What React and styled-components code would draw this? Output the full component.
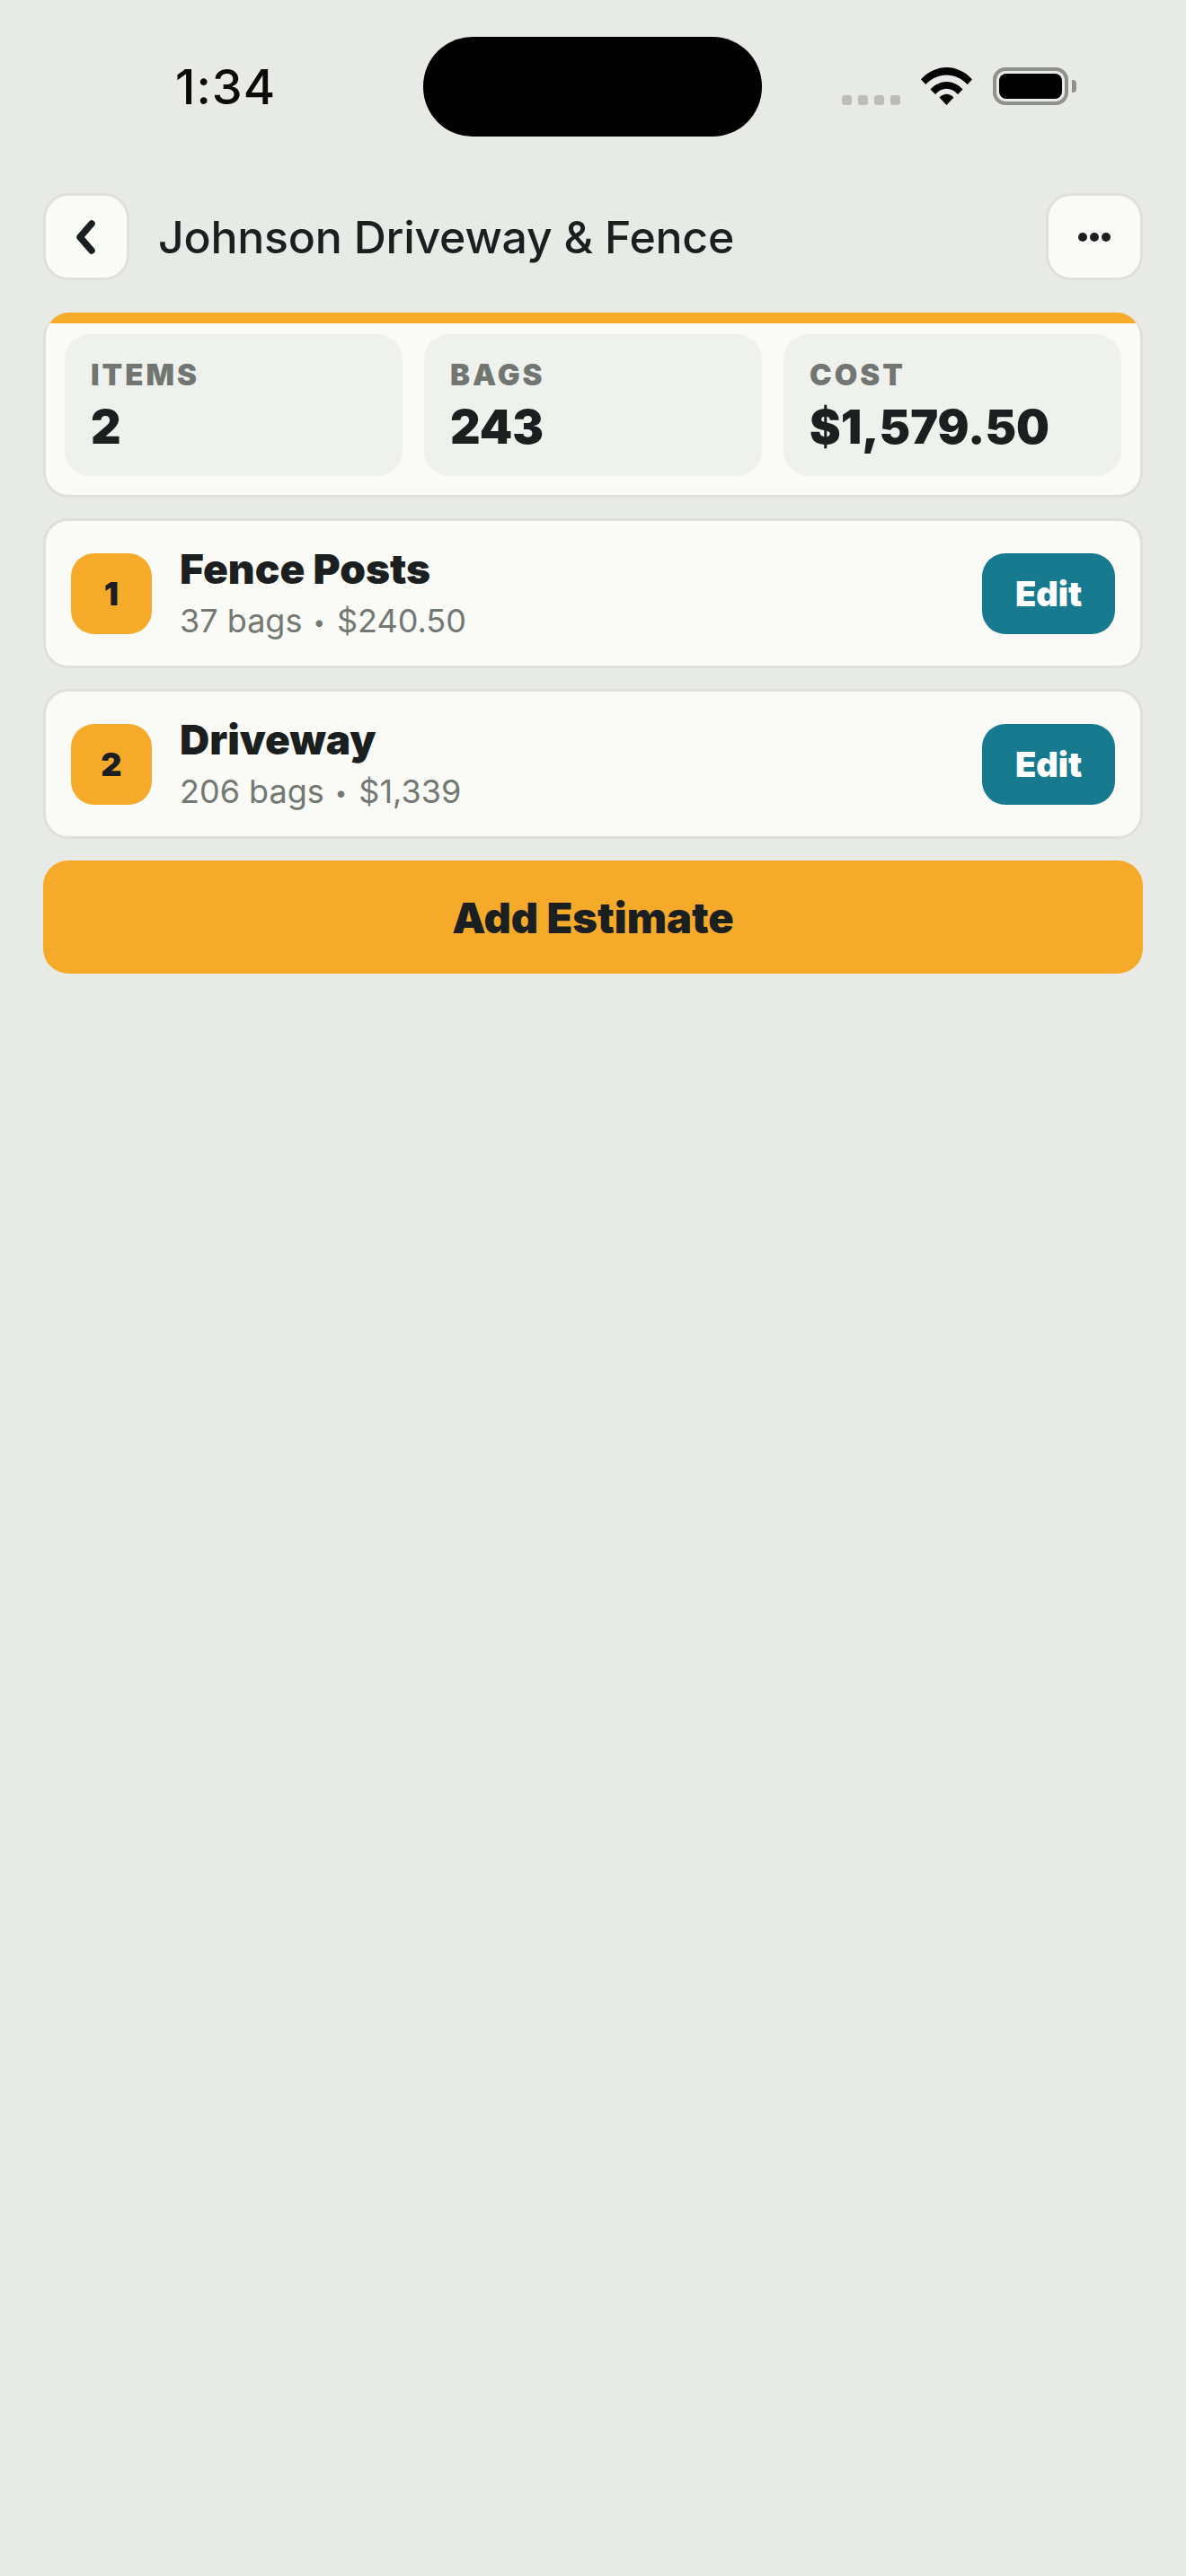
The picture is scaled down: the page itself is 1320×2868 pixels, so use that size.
import React from "react";
import styled, { createGlobalStyle } from "styled-components";

const GlobalStyle = createGlobalStyle`
  html, body {
    margin: 0;
    padding: 0;
    background: #e8eae5;
  }
  * {
    box-sizing: border-box;
  }
`;

const Screen = styled.div`
  width: 1320px;
  min-height: 2868px;
  background: #e8eae5;
  font-family: Inter, "Liberation Sans", sans-serif;
  color: #1b1f20;
`;

const StatusBar = styled.div`
  display: grid;
  grid-template-columns: 471px 377px 1fr;
  height: 152px;
  padding-top: 41px;
`;
const Time = styled.div`
  padding: 24px 0 0 195px;
  font-size: 54px;
  line-height: 64px;
  font-weight: 500;
  letter-spacing: 1px;
  color: #0a0a0a;
`;
const Island = styled.div`
  height: 111px;
  background: #000;
  border-radius: 55px;
`;
const StatusIcons = styled.div`
  display: flex;
  align-items: flex-start;
  padding: 34px 0 0 89px;
`;
const Signal = styled.div`
  display: flex;
  gap: 7px;
  margin: 31px 23px 0 0;
`;
const SignalDot = styled.span`
  width: 11px;
  height: 11px;
  border-radius: 3px;
  background: #bcbdb9;
`;
const Battery = styled.div`
  display: flex;
  align-items: center;
  margin-left: 23px;
`;
const BatteryShell = styled.div`
  width: 84px;
  height: 42px;
  padding: 3px;
  border: 4px solid #8f918d;
  border-radius: 14px;
`;
const BatteryFill = styled.div`
  height: 100%;
  background: #000;
  border-radius: 8px;
`;
const BatteryNub = styled.div`
  width: 5px;
  height: 14px;
  margin-left: 4px;
  background: #8f918d;
  border-radius: 0 4px 4px 0;
`;

const Content = styled.main`
  display: flex;
  flex-direction: column;
  gap: 23px;
  padding: 63px 48px 0;
`;
const Header = styled.header`
  display: flex;
  align-items: center;
  margin-bottom: 13px;
`;
const IconButton = styled.button`
  display: flex;
  align-items: center;
  justify-content: center;
  flex: none;
  width: ${(p) => p.$width}px;
  height: 97px;
  padding: 0;
  background: #fafbf6;
  border: 3px solid #dfe0db;
  border-radius: 28px;
`;
const Title = styled.h1`
  flex: 1;
  margin: 0 0 0 32px;
  font-size: 50px;
  line-height: 60px;
  font-weight: 500;
  letter-spacing: -0.25px;
  color: #1b1f20;
`;

const Card = styled.section`
  background: #fafbf6;
  border: 3px solid #dfe0db;
  border-radius: 28px;
`;
const SummaryCard = styled(Card)`
  border-top: 0;
  overflow: hidden;
`;
const AccentBar = styled.div`
  height: 12px;
  background: #f5aa2a;
`;
const Stats = styled.div`
  display: grid;
  grid-template-columns: repeat(3, 1fr);
  gap: 24px;
  padding: 12px 21px 21px;
`;
const StatTile = styled.div`
  height: 158px;
  padding: 25px 29px 0;
  background: #eff1ec;
  border-radius: 28px;
`;
const StatLabel = styled.div`
  font-size: 33px;
  line-height: 40px;
  font-weight: 900;
  letter-spacing: 3px;
  color: #727672;
`;
const StatValue = styled.div`
  margin-top: 8px;
  font-size: 52px;
  line-height: 62px;
  font-weight: 900;
  color: #1b1f20;
`;

const EstimateRow = styled(Card)`
  display: flex;
  align-items: center;
  height: 167px;
  padding: 0 28px;
`;
const Badge = styled.div`
  display: flex;
  align-items: center;
  justify-content: center;
  flex: none;
  width: 90px;
  height: 90px;
  background: #f5aa2a;
  border-radius: 26px;
  font-size: 36px;
  font-weight: 900;
`;
const RowText = styled.div`
  flex: 1;
  margin-left: 31px;
`;
const RowName = styled.div`
  font-size: 46px;
  line-height: 54px;
  font-weight: 900;
`;
const RowMeta = styled.div`
  margin-top: 9px;
  font-size: 36px;
  line-height: 44px;
  font-weight: 400;
  color: #737873;
`;
const Bullet = styled.span`
  margin: 0 13px 0 12px;
  font-size: 24px;
  vertical-align: 3px;
`;
const EditButton = styled.button`
  flex: none;
  width: 148px;
  height: 90px;
  padding: 0;
  background: #177a8f;
  border: 0;
  border-radius: 26px;
  font-family: inherit;
  font-size: 38px;
  font-weight: 900;
  color: #fff;
`;
const AddButton = styled.button`
  height: 126px;
  margin-top: 1px;
  padding: 0;
  background: #f5aa2a;
  border: 0;
  border-radius: 28px;
  font-family: inherit;
  font-size: 47px;
  font-weight: 900;
  color: #1b1f20;
`;

const estimates = [
  { id: 1, name: "Fence Posts", bags: "37 bags", cost: "$240.50" },
  { id: 2, name: "Driveway", bags: "206 bags", cost: "$1,339" },
];

const stats = [
  { label: "ITEMS", value: "2" },
  { label: "BAGS", value: "243" },
  { label: "COST", value: "$1,579.50" },
];

function WifiIcon() {
  return (
    <svg width="57" height="42" viewBox="0 0 57 42" style={{ flex: "none" }}>
      <path d="M0 13.5 C16 -4.5 41 -4.5 57 13.5 L51.6 19 C38.5 5 18.5 5 5.4 19 Z" fill="#000" />
      <path d="M10.5 24.5 C21 13 36 13 46.5 24.5 L41 30 C33.500 21.500 23.500 21.500 16 30 Z" fill="#000" />
      <path d="M20.500 33.500 C25.500 28.500 31.500 28.500 36.500 33.500 L28.500 42 Z" fill="#000" />
    </svg>
  );
}

function App() {
  return (
    <Screen>
      <GlobalStyle />
      <StatusBar>
        <Time>1:34</Time>
        <Island />
        <StatusIcons>
          <Signal>
            <SignalDot />
            <SignalDot />
            <SignalDot />
            <SignalDot />
          </Signal>
          <WifiIcon />
          <Battery>
            <BatteryShell>
              <BatteryFill />
            </BatteryShell>
            <BatteryNub />
          </Battery>
        </StatusIcons>
      </StatusBar>
      <Content>
        <Header>
          <IconButton $width={96}>
            <svg width="30" height="42" viewBox="0 0 30 42" fill="none">
              <path d="M21 6 L8 21 L21 36" stroke="#1b1f20" strokeWidth="7.500" strokeLinecap="round" strokeLinejoin="round" />
            </svg>
          </IconButton>
          <Title>Johnson Driveway &amp; Fence</Title>
          <IconButton $width={108}>
            <svg width="36" height="10" viewBox="0 0 36 10" fill="#1b1f20">
              <circle cx="5" cy="5" r="5" />
              <circle cx="18" cy="5" r="5" />
              <circle cx="31" cy="5" r="5" />
            </svg>
          </IconButton>
        </Header>
        <SummaryCard>
          <AccentBar />
          <Stats>
            {stats.map((s) => (
              <StatTile key={s.label}>
                <StatLabel>{s.label}</StatLabel>
                <StatValue>{s.value}</StatValue>
              </StatTile>
            ))}
          </Stats>
        </SummaryCard>
        {estimates.map((e) => (
          <EstimateRow key={e.id}>
            <Badge>{e.id}</Badge>
            <RowText>
              <RowName>{e.name}</RowName>
              <RowMeta>
                {e.bags}
                <Bullet>•</Bullet>
                {e.cost}
              </RowMeta>
            </RowText>
            <EditButton>Edit</EditButton>
          </EstimateRow>
        ))}
        <AddButton>Add Estimate</AddButton>
      </Content>
    </Screen>
  );
}

export default App;
